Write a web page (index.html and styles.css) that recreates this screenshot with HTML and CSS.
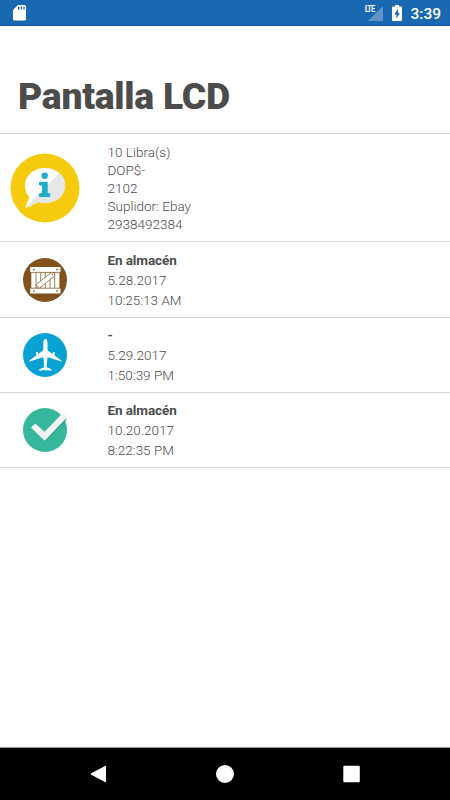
FILE: index.html
```
<!DOCTYPE html>
<html lang="es">
<head>
    <meta charset="utf-8">
    <title>Pantalla LCD</title>
    <link rel="stylesheet" href="styles.css">
</head>
<body>
    <div class="status-bar">
        <svg class="sd-card" width="14" height="17" viewBox="0 0 14 17">
            <path d="M5 1h6.5a1.5 1.5 0 0 1 1.500 1.500v12.500a1.500 1.500 0 0 1-1.500 1.500h-10a1.500 1.500 0 0 1-1.500-1.500V6z" fill="#fff"/>
            <path d="M5.700 2.500v3M8.400 2.500v3M11 2.500v3" stroke="#1b5fa8" stroke-width="1.300"/>
        </svg>
        <span class="lte">LTE</span>
        <svg class="signal" width="15" height="15" viewBox="0 0 15 15">
            <path d="M15 0v15H0z" fill="#6093c7"/>
        </svg>
        <svg class="battery" width="10" height="16" viewBox="0 0 10 16">
            <path d="M3 0h4v1.500h2a1 1 0 0 1 1 1V15a1 1 0 0 1-1 1H1a1 1 0 0 1-1-1V2.500a1 1 0 0 1 1-1h2z" fill="#fff"/>
            <path d="M5.900 3.800L2.200 9.400h2.200v4.200L7.900 8H5.900z" fill="#1a68b2"/>
        </svg>
        <span class="clock">3:39</span>
    </div>

    <h1 class="title">Pantalla LCD</h1>

    <div class="row info">
        <div class="icon">
            <svg width="70" height="70" viewBox="0 0 70 70">
                <circle cx="35" cy="35" r="34.500" fill="#f6cb0d"/>
                <path d="M35 15c11.500 0 20.200 7.700 20.200 17.400S46.500 50 35 50c-2.300 0-4.500-.3-6.500-.9L15.200 55.300l4.100-11.100C16.500 41.100 15 37 15 32.400 15 22.700 23.700 15 35 15z" fill="#fff"/>
                <path d="M49.300 20.100c3.700 3.100 5.900 7.500 5.900 12.300C55.200 42.100 46.500 50 35 50c-2.300 0-4.500-.3-6.500-.9L15.200 55.300z" fill="#e6e7e9"/>
                <circle cx="34.700" cy="22.700" r="3.200" fill="#1eaec8"/>
                <path d="M30 28.800h7.700v11.400h1.600a1 1 0 0 1 1 1v1.700a1 1 0 0 1-1 1h-9.300a1 1 0 0 1-1-1v-1.700a1 1 0 0 1 1-1h2v-7.700h-2a1 1 0 0 1-1-1v-1.700a1 1 0 0 1 1-1z" fill="#1eaec8"/>
            </svg>
        </div>
        <div class="text">
            <div>10 Libra(s)</div>
            <div>DOP$-</div>
            <div>2102</div>
            <div>Suplidor: Ebay</div>
            <div>2938492384</div>
        </div>
    </div>

    <div class="row">
        <div class="icon">
            <svg width="44" height="44" viewBox="0 0 44 44">
                <circle cx="22" cy="22" r="22" fill="#80531c"/>
                <path d="M7.200 9h30.300v5.300H36.400v16h1.100v5.200H7.200v-5.200h1.100v-16H7.200z" fill="#fff"/>
                <path d="M8 14.400h29M8 30.200h29M13 14.400v15.800M17.700 14.400v15.800M22.300 14.400v15.800M27 14.400v15.800M31.700 14.400v15.800" fill="none" stroke="#8a602f" stroke-width=".8"/>
                <path d="M13.300 29.800v-3.400L28.200 14.700h3.300v3.400L16.800 29.800z" fill="#fff" stroke="#80531c" stroke-width=".7"/>
                <g fill="#713d09">
                    <circle cx="10.800" cy="11.600" r=".8"/><circle cx="33.900" cy="11.600" r=".8"/>
                    <circle cx="10.800" cy="33" r=".8"/><circle cx="33.900" cy="33" r=".8"/>
                    <circle cx="29.300" cy="16.700" r=".6"/><circle cx="15" cy="28" r=".6"/>
                </g>
            </svg>
        </div>
        <div class="text">
            <div class="status">En almacén</div>
            <div>5.28.2017</div>
            <div>10:25:13 AM</div>
        </div>
    </div>

    <div class="row">
        <div class="icon">
            <svg width="44" height="44" viewBox="0 0 44 44">
                <circle cx="22" cy="22" r="22" fill="#07a1d3"/>
                <path d="M22.400 5.700c1.300 0 2.100 2.200 2.100 4.600v6.900l5.300 4.100v-2.400h1.800v3.700l6.100 4.300c.8.600 1 1 1.100 1.900L26 24.500h-1.600l-.8 9.700 4.400 1.900c.5.400.7.900.7 1.600l-5.700-.8-.6 1-.6-1-5.700.8c0-.7.200-1.200.7-1.600l4.400-1.900-.8-9.700h-1.600L6 28.800c.1-.9.3-1.300 1.100-1.900l6.100-4.300v-3.700H15v2.400l5.300-4.100v-6.900c0-2.400.8-4.600 2.100-4.600z" fill="#fff"/>
            </svg>
        </div>
        <div class="text">
            <div class="status">-</div>
            <div>5.29.2017</div>
            <div>1:50:39 PM</div>
        </div>
    </div>

    <div class="row">
        <div class="icon">
            <svg width="44" height="44" viewBox="0 0 44 44">
                <circle cx="22" cy="22" r="22" fill="#36b69b"/>
                <path d="M21.700 32.500L43.200 10.500l.5 1L22.500 33.300z" fill="#2a9c84"/>
                <path d="M8 19.500l4.200-4 9.400 8.300L40 4.800l4.400 4.300-22.700 23.600z" fill="#f1f2f2"/>
            </svg>
        </div>
        <div class="text">
            <div class="status">En almacén</div>
            <div>10.20.2017</div>
            <div>8:22:35 PM</div>
        </div>
    </div>

    <div class="nav-bar">
        <svg width="18" height="20" viewBox="0 0 18 20">
            <path d="M16 1.500v17L1.300 10.700a.8.8 0 0 1 0-1.400z" fill="#fff"/>
        </svg>
        <svg width="18" height="20" viewBox="0 0 18 20">
            <circle cx="9" cy="10" r="9" fill="#fff"/>
        </svg>
        <svg width="18" height="20" viewBox="0 0 18 20">
            <rect x="1.300" y="1.700" width="16.500" height="16.500" rx="1" fill="#fff"/>
        </svg>
    </div>
</body>
</html>
```
FILE: styles.css
```
* {
    box-sizing: border-box;
}
body {
    display: flex;
    flex-direction: column;
    margin: 0;
    height: 100vh;
    overflow: hidden;
    background-color: #fff;
    color: #4c4c4c;
    font-family: Roboto, sans-serif;
}
svg {
    display: block;
    flex-shrink: 0;
    overflow: visible;
}
.status-bar {
    display: flex;
    align-items: flex-start;
    height: 26px;
    padding: 4px 9px 0 13px;
    background-color: #1a68b2;
    border-bottom: 1px solid #0f58a0;
    color: #fff;
}
.sd-card {
    margin-right: auto;
}
.lte {
    font-family: "Roboto Condensed", Roboto, sans-serif;
    font-size: 9px;
    font-weight: 500;
    line-height: 10px;
    letter-spacing: -0.9px;
    margin-right: -6px;
}
.signal {
    margin: 2px 9px 0 0;
}
.battery {
    margin: 1px 8px 0 0;
}
.clock {
    font-size: 15.500px;
    font-weight: 500;
    line-height: 20px;
}
.title {
    height: 108px;
    margin: 0;
    padding: 48px 18px 0;
    border-bottom: 1px solid #d6d6d6;
    font-size: 37.300px;
    font-weight: 900;
    line-height: 44px;
    letter-spacing: -0.250px;
}
.row {
    display: flex;
    align-items: center;
    height: 75.350px;
    border-bottom: 1px solid #d6d6d6;
    font-size: 13.500px;
    font-weight: 300;
    line-height: 20px;
}
.row.info {
    height: 108.400px;
    line-height: 18px;
}
.icon {
    display: flex;
    justify-content: center;
    width: 90px;
}
.text {
    margin-left: 17.500px;
}
.status {
    font-weight: 700;
    letter-spacing: -0.1px;
}
/* Android navigation buttons */
.nav-bar {
    display: flex;
    justify-content: space-between;
    align-items: center;
    height: 53px;
    margin-top: auto;
    padding: 0 90px;
    background-color: #000;
    border-top: 1px solid #999;
}
```
